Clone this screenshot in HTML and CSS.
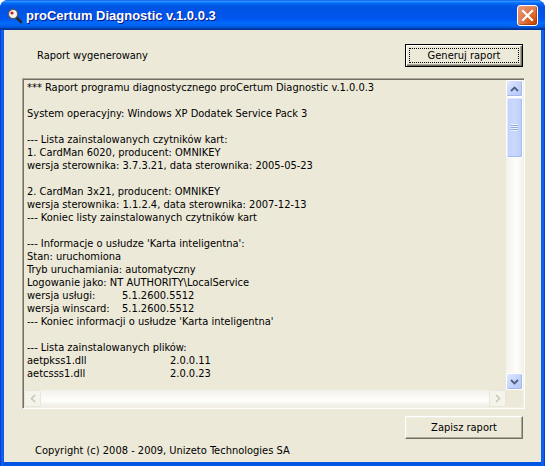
FILE: index.html
```html
<!DOCTYPE html>
<html lang="pl">
<head>
<meta charset="utf-8">
<title>proCertum Diagnostic v.1.0.0.3</title>
<link rel="stylesheet" href="styles.css">
</head>
<body>
<div class="window">
  <div class="titlebar">
    <svg class="app-icon" width="16" height="16" viewBox="0 0 16 16">
      <line x1="8.5" y1="8.5" x2="14" y2="14" stroke="#2a2a2a" stroke-width="2.6" stroke-linecap="round"/>
      <circle cx="6" cy="6" r="4.6" fill="#f4f4f4" stroke="#5a5a5a" stroke-width="1.2"/>
      <circle cx="5" cy="5" r="1.6" fill="#d21b1b"/>
    </svg>
    <span class="title">proCertum Diagnostic v.1.0.0.3</span>
    <button class="close" aria-label="Zamknij">
      <svg width="13" height="13" viewBox="0 0 13 13"><path d="M2 2 L11 11 M11 2 L2 11" stroke="#fff" stroke-width="2.2" stroke-linecap="square"/></svg>
    </button>
  </div>
  <div class="client">
    <div class="top-row">
      <span class="status">Raport wygenerowany</span>
      <button class="btn btn-default"><span class="focus">Generuj raport</span></button>
    </div>
    <div class="report">
      <div class="report-text">
<div class="line">*** Raport programu diagnostycznego proCertum Diagnostic v.1.0.0.3</div>
<div class="line"></div>
<div class="line">System operacyjny: Windows XP Dodatek Service Pack 3</div>
<div class="line"></div>
<div class="line">--- Lista zainstalowanych czytników kart:</div>
<div class="line">1. CardMan 6020, producent: OMNIKEY</div>
<div class="line">wersja sterownika: 3.7.3.21, data sterownika: 2005-05-23</div>
<div class="line"></div>
<div class="line">2. CardMan 3x21, producent: OMNIKEY</div>
<div class="line">wersja sterownika: 1.1.2.4, data sterownika: 2007-12-13</div>
<div class="line">--- Koniec listy zainstalowanych czytników kart</div>
<div class="line"></div>
<div class="line">--- Informacje o usłudze 'Karta inteligentna':</div>
<div class="line">Stan: uruchomiona</div>
<div class="line">Tryb uruchamiania: automatyczny</div>
<div class="line">Logowanie jako: NT AUTHORITY\LocalService</div>
<div class="line"><span class="col1">wersja usługi:</span>5.1.2600.5512</div>
<div class="line"><span class="col1">wersja winscard:</span>5.1.2600.5512</div>
<div class="line">--- Koniec informacji o usłudze 'Karta inteligentna'</div>
<div class="line"></div>
<div class="line">--- Lista zainstalowanych plików:</div>
<div class="line"><span class="col2">aetpkss1.dll</span>2.0.0.11</div>
<div class="line"><span class="col2">aetcsss1.dll</span>2.0.0.23</div>
      </div>
      <div class="vscroll">
        <div class="sb-btn sb-up"><svg width="9" height="6" viewBox="0 0 9 6"><path d="M1 5 L4.5 1.5 L8 5" fill="none" stroke="#4d6185" stroke-width="1.8"/></svg></div>
        <div class="sb-track-v">
          <div class="thumb"><span class="grip"></span></div>
        </div>
        <div class="sb-btn sb-down"><svg width="9" height="6" viewBox="0 0 9 6"><path d="M1 1 L4.5 4.5 L8 1" fill="none" stroke="#4d6185" stroke-width="1.8"/></svg></div>
      </div>
      <div class="hscroll">
        <div class="sb-btn sb-dis"><svg width="6" height="9" viewBox="0 0 6 9"><path d="M5 1 L1.5 4.5 L5 8" fill="none" stroke="#c9c7ba" stroke-width="1.6"/></svg></div>
        <div class="sb-track-h"></div>
        <div class="sb-btn sb-dis"><svg width="6" height="9" viewBox="0 0 6 9"><path d="M1 1 L4.5 4.5 L1 8" fill="none" stroke="#c9c7ba" stroke-width="1.6"/></svg></div>
      </div>
      <div class="corner"></div>
    </div>
    <div class="bottom-row">
      <button class="btn">Zapisz raport</button>
    </div>
    <div class="copyright">Copyright (c) 2008 - 2009, Unizeto Technologies SA</div>
  </div>
</div>
</body>
</html>
```

FILE: styles.css
```css
html, body {
  margin: 0;
  padding: 0;
  background: #ffffff;
}

body {
  font-family: "DejaVu Sans Condensed", "Liberation Sans", sans-serif;
  font-size: 11px;
  color: #000;
}

.window {
  width: 545px;
  height: 466px;
  box-sizing: border-box;
  display: flex;
  flex-direction: column;
  border-radius: 8px 8px 0 0;
  overflow: hidden;
  background: linear-gradient(to right, #0831d9 0, #166aee 2px, #0055e5 4px, #0055e5 541px, #166aee 543px, #0831d9 545px);
}

.titlebar {
  height: 30px;
  flex: none;
  display: flex;
  align-items: center;
  padding: 0 6px 0 7px;
  background: linear-gradient(to bottom, #0058ee 0%, #3593ff 4%, #288eff 6%, #127dff 8%, #036ffc 10%, #0262ee 14%, #0057e5 20%, #0054e3 24%, #0055eb 56%, #005bf5 66%, #026afe 76%, #0062ef 86%, #0052d6 92%, #0040ab 94%, #003092 100%);
}

.app-icon {
  flex: none;
  margin-top: 1px;
}

.title {
  flex: 1;
  margin-left: 3px;
  margin-top: 1px;
  font-family: "Liberation Sans", sans-serif;
  font-weight: bold;
  font-size: 13px;
  color: #ffffff;
  text-shadow: 1px 1px 0 #0a1883;
}

.close {
  width: 21px;
  height: 21px;
  padding: 0;
  margin-top: 1px;
  margin-right: 1px;
  border: 1px solid #ffffff;
  border-radius: 3px;
  display: flex;
  align-items: center;
  justify-content: center;
  background: radial-gradient(circle at 85% 85%, #cc4600 0%, #dc6527 30%, #e27c4f 55%, #e89f7f 100%);
  box-shadow: inset -1px -1px 1px rgba(120, 30, 0, 0.5);
}

.client {
  flex: 1;
  margin: 0 4px 4px 4px;
  background: #ece9d8;
  display: flex;
  flex-direction: column;
}

.top-row {
  display: flex;
  align-items: center;
  justify-content: space-between;
  margin-top: 14px;
  height: 23px;
  padding: 0 18px 0 33px;
}

.status {
  margin-top: -1px;
}

.btn {
  width: 118px;
  height: 23px;
  box-sizing: border-box;
  padding: 0;
  font-family: inherit;
  font-size: 11px;
  color: #000;
  background: #ece9d8;
  border: 1px solid;
  border-color: #ffffff #716f64 #716f64 #ffffff;
  box-shadow: inset -1px -1px 0 #aca899, inset 1px 1px 0 #f1efe2;
}

.btn-default {
  border: 1px solid #000000;
  box-shadow: inset 1px 1px 0 #ffffff, inset -1px -1px 0 #716f64, inset -2px -2px 0 #aca899;
  display: flex;
  align-items: center;
  justify-content: center;
}

.focus {
  display: flex;
  align-items: center;
  justify-content: center;
  width: 110px;
  height: 15px;
  box-sizing: border-box;
  border: 1px dotted #000;
}

.report {
  margin: 11px 0 0 18px;
  width: 503px;
  height: 331px;
  box-sizing: border-box;
  border: 1px solid;
  border-color: #aca899 #ffffff #ffffff #aca899;
  box-shadow: inset 1px 1px 0 #716f64, inset -1px -1px 0 #f1efe2;
  padding: 1px;
  display: grid;
  grid-template-columns: 1fr 17px;
  grid-template-rows: 1fr 17px;
}

.report-text {
  overflow: hidden;
  padding: 1px 0 0 3px;
  line-height: 13px;
  white-space: nowrap;
}

.line {
  height: 13px;
}

.col1 {
  display: inline-block;
  width: 95px;
}

.col2 {
  display: inline-block;
  width: 143px;
}

.vscroll {
  display: flex;
  flex-direction: column;
  background: linear-gradient(to right, #f3f1ec, #fefefb 60%, #f4f2ec);
}

.sb-btn {
  width: 17px;
  height: 17px;
  box-sizing: border-box;
  flex: none;
  display: flex;
  align-items: center;
  justify-content: center;
}

.sb-up, .sb-down {
  border: 1px solid #ffffff;
  border-radius: 2px;
  background: linear-gradient(135deg, #e0e9fe 0%, #c6d4fb 50%, #b4c7f8 100%);
  box-shadow: inset -1px -1px 0 #a5b8e8;
}

.sb-track-v {
  flex: 1;
  display: flex;
  flex-direction: column;
}

.thumb {
  height: 61px;
  box-sizing: border-box;
  border: 1px solid #ffffff;
  border-radius: 2px;
  background: linear-gradient(to right, #c3d3fd 0%, #cad8fd 50%, #bccdf9 100%);
  box-shadow: inset -1px -1px 0 #a8bdf2, inset 1px 1px 0 #dfe7ff;
  display: flex;
  align-items: center;
  justify-content: center;
}

.grip {
  width: 7px;
  height: 7px;
  background: repeating-linear-gradient(to bottom, #eef4fe 0, #eef4fe 1px, #8caae6 1px, #8caae6 2px);
}

.hscroll {
  display: flex;
  background: linear-gradient(to bottom, #f3f1ec, #fefefb 60%, #eeede5);
}

.sb-dis {
  border: 1px solid #e8e6df;
  border-radius: 2px;
  background: #f5f4ea;
}

.sb-track-h {
  flex: 1;
}

.corner {
  background: #ece9d8;
}

.bottom-row {
  display: flex;
  justify-content: flex-end;
  padding-right: 18px;
  margin-top: 7px;
}

.copyright {
  padding-left: 31px;
  margin-top: 5px;
}
```
